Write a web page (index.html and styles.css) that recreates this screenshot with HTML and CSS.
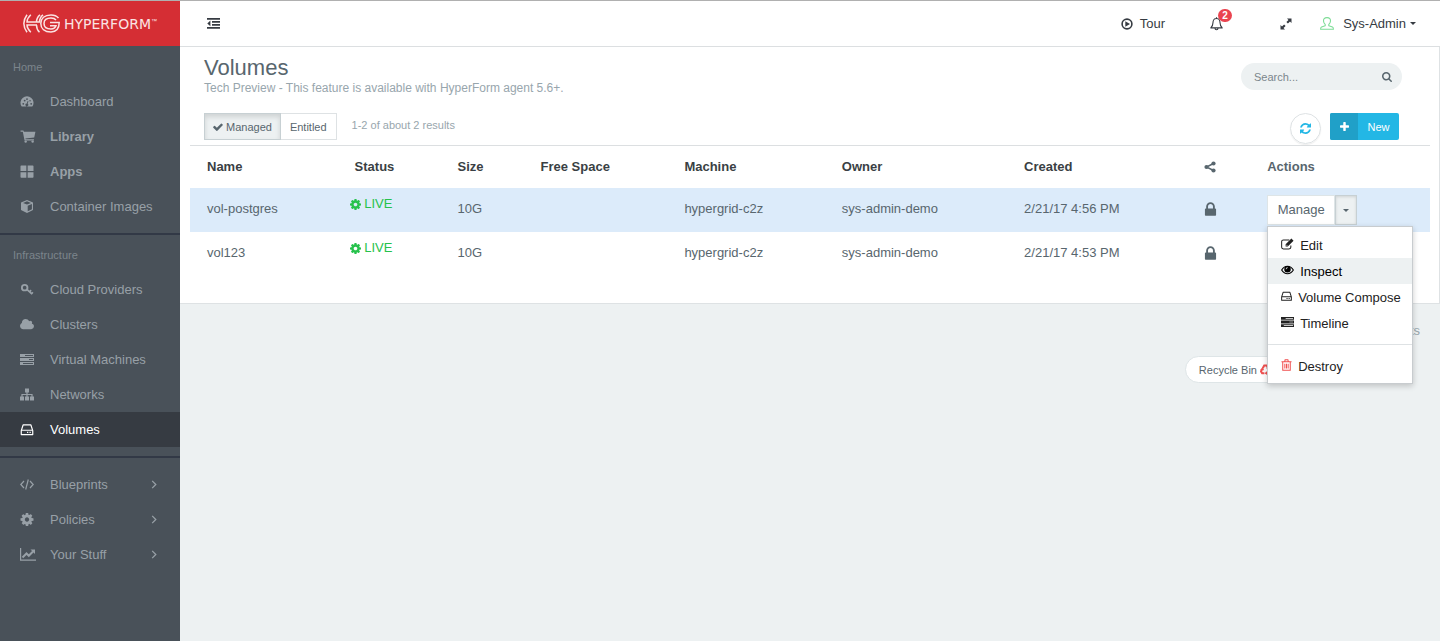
FILE: index.html
```html
<!DOCTYPE html>
<html lang="en">
<head>
  <meta charset="UTF-8">
  <meta name="viewport" content="width=device-width, initial-scale=1">
  <title>HyperForm - Volumes</title>
  <link rel="stylesheet" href="styles.css">
</head>
<body>
  <!-- icon sprite -->
  <svg class="sprite" aria-hidden="true">
    <symbol id="i-cog" viewBox="128 128 1536 1536"><path d="M1152 896q0-106-75-181t-181-75-181 75-75 181 75 181 181 75 181-75 75-181zm512-109v222q0 12-8 23t-20 13l-185 28q-19 54-39 91 35 50 107 138 10 12 10 25t-9 23q-27 37-99 108t-94 71q-12 0-26-9l-138-108q-44 23-91 38-16 136-29 186-7 28-36 28h-222q-14 0-24.500-8.500t-11.500-21.500l-28-184q-49-16-90-37l-141 107q-10 9-25 9-14 0-25-11-126-114-165-168-7-10-7-23 0-12 8-23 15-21 51-66.500t54-70.500q-27-50-41-99l-183-27q-13-2-21-12.500t-8-23.500v-222q0-12 8-23t19-13l186-28q14-46 39-92-40-57-107-138-10-12-10-24 0-10 9-23 26-36 98.500-107.500t94.500-71.500q13 0 26 10l138 107q44-23 91-38 16-136 29-186 7-28 36-28h222q14 0 24.500 8.500t11.500 21.500l28 184q49 16 90 37l142-107q9-9 24-9 13 0 25 10 129 119 165 170 7 8 7 22 0 12-8 23-15 21-51 66.500t-54 70.500q26 50 41 98l183 28q13 2 21 12.500t8 23.500z"/></symbol>
    <symbol id="i-check" viewBox="100 100 1592 1592"><path d="M1671 566q0 40-28 68l-724 724-136 136q-28 28-68 28t-68-28l-136-136-362-362q-28-28-28-68t28-68l136-136q28-28 68-28t68 28l294 295 656-657q28-28 68-28t68 28l136 136q28 28 28 68z"/></symbol>
    <symbol id="i-refresh" viewBox="128 128 1536 1536"><path d="M1639 1056q0 5-1 7-64 268-268 434.500t-478 166.500q-146 0-282.500-55t-243.500-157l-129 129q-19 19-45 19t-45-19-19-45v-448q0-26 19-45t45-19h448q26 0 45 19t19 45-19 45l-137 137q71 66 161 102t187 36q134 0 250-65t186-179q11-17 53-117 8-23 30-23h192q13 0 22.500 9.500t9.500 22.500zm25-800v448q0 26-19 45t-45 19h-448q-26 0-45-19t-19-45 19-45l138-138q-148-137-349-137-134 0-250 65t-186 179q-11 17-53 117-8 23-30 23h-199q-13 0-22.500-9.500t-9.500-22.500v-7q65-268 270-434.500t480-166.500q146 0 284 55.500t245 156.500l130-129q19-19 45-19t45 19 19 45z"/></symbol>
    <symbol id="i-search" viewBox="64 128 1664 1664"><path d="M1216 832q0-185-131.500-316.500t-316.500-131.500-316.500 131.500-131.500 316.500 131.500 316.500 316.500 131.500 316.500-131.500 131.500-316.500zm512 832q0 52-38 90t-90 38q-54 0-90-38l-343-342q-179 124-399 124-143 0-273.500-55.500t-225-150-150-225-55.500-273.500 55.500-273.500 150-225 225-150 273.500-55.500 273.500 55.500 225 150 150 225 55.500 273.500q0 220-124 399l343 343q37 37 37 90z"/></symbol>
    <symbol id="i-plus" viewBox="192 128 1408 1408"><path d="M1600 736v192q0 40-28 68t-68 28h-416v416q0 40-28 68t-68 28h-192q-40 0-68-28t-28-68v-416h-416q-40 0-68-28t-28-68v-192q0-40 28-68t68-28h416v-416q0-40 28-68t68-28h192q40 0 68 28t28 68v416h416q40 0 68 28t28 68z"/></symbol>
    <symbol id="i-lock" viewBox="224 128 1344 1408"><path d="M640 768h512v-192q0-106-75-181t-181-75-181 75-75 181v192zm832 96v576q0 40-28 68t-68 28h-960q-40 0-68-28t-28-68v-576q0-40 28-68t68-28h32v-192q0-184 132-316t316-132 316 132 132 316v192h32q40 0 68 28t28 68z"/></symbol>
    <symbol id="i-cloud" viewBox="64 0 1920 1792"><path d="M1984 1152q0 159-112.500 271.500t-271.500 112.500h-1088q-185 0-316.500-131.500t-131.500-316.500q0-132 71-241.500t187-163.500q-2-28-2-43 0-212 150-362t362-150q158 0 286.500 88t187.500 230q70-62 166-62 106 0 181 75t75 181q0 75-41 138 129 30 213 134.500t84 239.500z"/></symbol>
    <symbol id="i-gauge" viewBox="0 0 14 14"><path fill-rule="evenodd" d="M1.300 12.500A7 7 0 1 1 12.700 12.500zM2 9.500a1 1 0 1 0 2 0a1 1 0 1 0-2 0M3.500 6a1 1 0 1 0 2 0a1 1 0 1 0-2 0M6 4.400a1 1 0 1 0 2 0a1 1 0 1 0-2 0M10.500 9.500a1 1 0 1 0 2 0a1 1 0 1 0-2 0M9.500 6.300a.8.8 0 1 0 1.600 0a.8.8 0 1 0-1.600 0M7.700 6.500l-.9 2.700a1.500 1.500 0 1 0 .9.300l.9-2.700z"/></symbol>
    <symbol id="i-cart" viewBox="0 0 16 14"><path d="M0 .5h3l.6 1.500H16l-1.300 6L5.200 9.200l.2.800h9v1.200H4.300L2.400 1.800H0z"/><circle cx="5.500" cy="12.500" r="1.300"/><circle cx="13" cy="12.500" r="1.300"/></symbol>
    <symbol id="i-grid" viewBox="0 0 12 12"><path d="M0 1.200Q0 .5.700.5h4.700v5H0zM6.600.5h4.700q.7 0 .7.700v4.300H6.600zM0 6.700h5.400v5H.7q-.7 0-.7-.7zM6.600 6.700H12v4.300q0 .7-.7.700H6.600z"/></symbol>
    <symbol id="i-cube" viewBox="0 0 13 13"><path fill-rule="evenodd" d="M6.500 0L12.500 2.400V10L6.500 13L.5 10V2.400zM6.500 1.300L2.600 2.900L6.500 4.400L10.400 2.900zM7.200 5.700V11.200L11.400 9.200V4z"/></symbol>
    <symbol id="i-key" viewBox="0 0 14 14"><g fill="none" stroke="currentColor"><circle cx="4.500" cy="5" r="3" stroke-width="2"/><path stroke-width="1.800" d="M6.500 6.500L12.500 12M9.800 9.500l1.600-1.800M12 11.500l1.300-1.500"/></g></symbol>
    <symbol id="i-server" viewBox="0 0 14 12"><path fill-rule="evenodd" d="M0 .5h14v3H0zM0 4.500h14v3H0zM0 8.500h14v3H0zM5 1.600v.8h8v-.8zM9 5.600v.8h4v-.8zM3 9.600v.8h10v-.8z"/></symbol>
    <symbol id="i-sitemap" viewBox="0 0 14 12"><path d="M5 0h4v4H7.600v1.400h5V8H14v4h-4V8h1.400V6.600H7.600V8H9v4H5V8h1.400V6.600H2.600V8H4v4H0V8h1.400V5.400h5V4H5z"/></symbol>
    <symbol id="i-hdd" viewBox="0 0 12 12"><g fill="none" stroke="currentColor" stroke-width="1.100" stroke-linejoin="round"><path d="M.7 7L2.400 1.800H9.600L11.300 7V10.700H.7zM.7 6.700H11.300"/><path d="M6 8.700h1.200M8.300 8.700h1.200"/></g></symbol>
    <symbol id="i-code" viewBox="0 0 14 12"><path fill="none" stroke="currentColor" stroke-width="1.200" d="M4 2.500L.8 6L4 9.500M10 2.500L13.200 6L10 9.500M8.300 1L5.700 11"/></symbol>
    <symbol id="i-chart" viewBox="0 0 16 13"><path fill="none" stroke="currentColor" stroke-width="1.200" d="M.6 0V12.200H16"/><path fill="none" stroke="currentColor" stroke-width="2" d="M2.500 9.500L6.500 5.500L8.800 7.800L13 3.500"/><path d="M10.500 1.500H15V6z"/></symbol>
    <symbol id="i-right" viewBox="0 0 6 10"><path fill="none" stroke="currentColor" stroke-width="1.400" d="M1 1L5 5L1 9"/></symbol>
    <symbol id="i-outdent" viewBox="0 0 13 11"><path d="M0 0h13v1.800H0zM5 3h8v1.800H5zM5 6h8v1.800H5zM0 9h13v1.800H0zM3.400 2.600v5.600L.3 5.400z"/></symbol>
    <symbol id="i-play" viewBox="0 0 12 12"><circle cx="6" cy="6" r="4.900" fill="none" stroke="currentColor" stroke-width="1.600"/><path d="M4.300 3.200L9 6L4.300 8.800z"/></symbol>
    <symbol id="i-bell" viewBox="0 0 13 14"><path fill="none" stroke="currentColor" stroke-width="1.100" stroke-linejoin="round" d="M6.500 1.500C4 1.500 3 3.500 3 5.500C3 8 2.300 9.500 .8 10.900H12.200C10.700 9.500 10 8 10 5.500C10 3.500 9 1.500 6.500 1.500zM6.500.3V1.500M5 11.200a1.500 1.500 0 0 0 3 0"/></symbol>
    <symbol id="i-expand" viewBox="0 0 12 12"><path d="M7 .5h4.500V5L10 3.500L7.900 5.600L6.400 4.100L8.500 2zM5 11.500H.5V7L2 8.500L4.100 6.400L5.600 7.900L3.500 10z"/></symbol>
    <symbol id="i-user" viewBox="0 0 14 13"><path fill="none" stroke="currentColor" stroke-width="1.100" stroke-linejoin="round" d="M7 .6C4.300.6 3.400 2.200 3.500 4C3.600 5.600 4.300 6.600 5.200 7.400V8.700L1.500 10C.8 10.300.6 11 .6 12.300H13.400C13.400 11 13.200 10.300 12.500 10L8.800 8.700V7.400C9.700 6.600 10.400 5.600 10.500 4C10.600 2.200 9.700.6 7 .6z"/></symbol>
    <symbol id="i-share" viewBox="0 0 12 12"><path fill="none" stroke="currentColor" stroke-width="1.400" d="M9.500 2.500L2.500 6L9.500 9.500"/><circle cx="9.500" cy="2.500" r="2.100"/><circle cx="2.500" cy="6" r="2.100"/><circle cx="9.500" cy="9.500" r="2.100"/></symbol>
    <symbol id="i-edit" viewBox="0 0 14 12"><path fill="none" stroke="currentColor" stroke-width="1.100" d="M9 1.600H2.600Q.7 1.600.7 3.200V9.600Q.7 11.300 2.600 11.300H8.600Q10.600 11.300 10.600 9.600V7.500"/><path fill-rule="evenodd" d="M11.200.2L13.500 2.500L7.300 8.700H5V6.400zM6 6.900L7.200 8L6.600 8.200L5.600 7.200z"/></symbol>
    <symbol id="i-eye" viewBox="0 0 14 12"><path fill="none" stroke="currentColor" stroke-width="1.200" d="M.7 6Q3.200 2 7 2T13.300 6Q10.800 10 7 10T.7 6z"/><path fill-rule="evenodd" d="M7 1.800A3.400 3.400 0 1 1 7 8.800A3.400 3.400 0 1 1 7 1.800zM5 5.300h.7Q5.800 3.900 7.200 3.800V3.100Q5.100 3.200 5 5.300z"/></symbol>
    <symbol id="i-trash" viewBox="0 0 12 13"><path fill="none" stroke="currentColor" stroke-width="1.100" d="M.5 2.900H11.500M4 2.700L4.500 .8H7.500L8 2.700M1.900 3V12.200H10.100V3M4.200 5V10.300M6 5V10.300M7.800 5V10.300"/></symbol>
    <symbol id="i-recycle" viewBox="0 0 12 12"><path fill="none" stroke="currentColor" stroke-width="2.200" d="M3 4.600L4.600 1.700H7.300L8.300 3.500M9.600 5.500L11 8L9.800 10H7.200M4.800 10H2.300L1 8L2.200 6"/><path d="M6.500 4.500L10 2V5.500zM7.800 7.500V12L5 10zM.2 6.500L2.500 3.500L4.600 6.800z"/></symbol>
  </svg>

  <div class="app">
    <aside class="sidebar">
      <a href="#" class="logo" aria-label="HyperForm home">
        <svg class="logo-mark" viewBox="0 0 37 19" aria-hidden="true">
          <g fill="none" stroke="currentColor" stroke-width="1.500">
            <path d="M4 .8Q-2.300 9.500 4 18.200M7.800.8Q4 4.500 4 8H16.500Q16.500 3.500 20 .8M7.800 18.200Q4 14.500 4 11H14M17 .8Q13.500 3.500 13.500 8M13.500 11Q13.500 15.500 16.500 18.200"/>
            <path d="M35.500 4Q33 .9 28 .9C21.500.9 17.800 4.500 17.800 9.500S21.500 18.100 28 18.100Q36.200 17.500 36.200 8.500H27M33 6Q31.500 4.100 28 4.100C23.500 4.100 21 6 21 9.500S23.500 15 28 15Q32 14.700 33 11.700H27"/>
          </g>
        </svg>
        <span class="logo-text">HYPERFORM</span><span class="logo-tm">™</span>
      </a>

      <nav>
        <div class="nav-section">
          <h2 class="nav-title">Home</h2>
          <ul>
            <li><a href="#"><svg class="nav-icon"><use href="#i-gauge"/></svg>Dashboard</a></li>
            <li><a href="#" class="strong"><svg class="nav-icon wide"><use href="#i-cart"/></svg>Library</a></li>
            <li><a href="#" class="strong"><svg class="nav-icon"><use href="#i-grid"/></svg>Apps</a></li>
            <li><a href="#"><svg class="nav-icon"><use href="#i-cube"/></svg>Container Images</a></li>
          </ul>
        </div>
        <div class="nav-section">
          <h2 class="nav-title">Infrastructure</h2>
          <ul>
            <li><a href="#"><svg class="nav-icon"><use href="#i-key"/></svg>Cloud Providers</a></li>
            <li><a href="#"><svg class="nav-icon"><use href="#i-cloud"/></svg>Clusters</a></li>
            <li><a href="#"><svg class="nav-icon"><use href="#i-server"/></svg>Virtual Machines</a></li>
            <li><a href="#"><svg class="nav-icon"><use href="#i-sitemap"/></svg>Networks</a></li>
            <li><a href="#" class="active"><svg class="nav-icon"><use href="#i-hdd"/></svg>Volumes</a></li>
          </ul>
        </div>
        <div class="nav-section untitled">
          <ul>
            <li><a href="#"><svg class="nav-icon"><use href="#i-code"/></svg>Blueprints<svg class="nav-arrow"><use href="#i-right"/></svg></a></li>
            <li><a href="#"><svg class="nav-icon"><use href="#i-cog"/></svg>Policies<svg class="nav-arrow"><use href="#i-right"/></svg></a></li>
            <li><a href="#"><svg class="nav-icon wide"><use href="#i-chart"/></svg>Your Stuff<svg class="nav-arrow"><use href="#i-right"/></svg></a></li>
          </ul>
        </div>
      </nav>
    </aside>

    <div class="main">
      <header class="topbar">
        <button type="button" class="toggle" aria-label="Toggle menu"><svg><use href="#i-outdent"/></svg></button>
        <a href="#" class="tour"><svg><use href="#i-play"/></svg>Tour</a>
        <a href="#" class="bell" aria-label="Notifications"><svg><use href="#i-bell"/></svg><span class="badge">2</span></a>
        <button type="button" class="expand" aria-label="Full screen"><svg><use href="#i-expand"/></svg></button>
        <button type="button" class="account"><svg><use href="#i-user"/></svg>Sys-Admin<span class="caret"></span></button>
      </header>

      <main>
        <section class="panel">
          <div class="panel-head">
            <div class="head-row">
              <div>
                <h1>Volumes</h1>
                <p class="subtitle">Tech Preview - This feature is available with HyperForm agent 5.6+.</p>
              </div>
              <form class="search">
                <input type="text" placeholder="Search..." aria-label="Search volumes">
                <button type="submit" aria-label="Search"><svg><use href="#i-search"/></svg></button>
              </form>
            </div>
            <div class="tool-row">
              <div class="btn-group">
                <button type="button" class="btn pressed"><svg><use href="#i-check"/></svg>Managed</button>
                <button type="button" class="btn">Entitled</button>
              </div>
              <span class="count">1-2 of about 2 results</span>
              <button type="button" class="refresh" aria-label="Refresh"><svg><use href="#i-refresh"/></svg></button>
              <button type="button" class="new"><span class="new-icon"><svg><use href="#i-plus"/></svg></span><span class="new-text">New</span></button>
            </div>
          </div>

          <table>
            <colgroup>
              <col class="c-name"><col class="c-status"><col class="c-size"><col class="c-free"><col class="c-machine">
              <col class="c-owner"><col class="c-created"><col class="c-share"><col class="c-actions">
            </colgroup>
            <thead>
              <tr>
                <th>Name</th>
                <th class="status-head">Status</th>
                <th>Size</th>
                <th>Free Space</th>
                <th>Machine</th>
                <th>Owner</th>
                <th>Created</th>
                <th class="muted" aria-label="Shared"><svg class="share"><use href="#i-share"/></svg></th>
                <th class="muted">Actions</th>
              </tr>
            </thead>
            <tbody>
              <tr class="selected">
                <td>vol-postgres</td>
                <td class="status"><svg><use href="#i-cog"/></svg> LIVE</td>
                <td>10G</td>
                <td></td>
                <td>hypergrid-c2z</td>
                <td>sys-admin-demo</td>
                <td>2/21/17 4:56 PM</td>
                <td><svg class="lock"><use href="#i-lock"/></svg></td>
                <td class="actions">
                  <div class="manage">
                    <button type="button" class="manage-btn">Manage</button>
                    <button type="button" class="manage-caret" aria-label="More actions"><span class="caret"></span></button>
                    <ul class="menu">
                      <li><a href="#"><svg><use href="#i-edit"/></svg>Edit</a></li>
                      <li><a href="#" class="hover"><svg><use href="#i-eye"/></svg>Inspect</a></li>
                      <li><a href="#"><svg class="narrow"><use href="#i-hdd"/></svg>Volume Compose</a></li>
                      <li><a href="#"><svg><use href="#i-server"/></svg>Timeline</a></li>
                      <li class="divider"></li>
                      <li><a href="#"><svg class="narrow danger"><use href="#i-trash"/></svg>Destroy</a></li>
                    </ul>
                  </div>
                </td>
              </tr>
              <tr>
                <td>vol123</td>
                <td class="status"><svg><use href="#i-cog"/></svg> LIVE</td>
                <td>10G</td>
                <td></td>
                <td>hypergrid-c2z</td>
                <td>sys-admin-demo</td>
                <td>2/21/17 4:53 PM</td>
                <td><svg class="lock"><use href="#i-lock"/></svg></td>
                <td class="actions"></td>
              </tr>
            </tbody>
          </table>
        </section>

        <div class="below">
          <p class="total">2 results</p>
          <button type="button" class="recycle">Recycle Bin <svg><use href="#i-recycle"/></svg></button>
        </div>
      </main>
    </div>
  </div>
</body>
</html>
```
FILE: styles.css
```css
* {
  margin: 0;
  padding: 0;
  box-sizing: border-box;
}

body {
  background: #edf1f2;
  color: #58666e;
  font-family: "Liberation Sans", Arial, sans-serif;
  font-size: 13px;
  line-height: 16px;
}

ul {
  list-style: none;
}

a {
  color: inherit;
  text-decoration: none;
}

button,
input {
  font: inherit;
  color: inherit;
  border: none;
  background: none;
}

button {
  cursor: pointer;
}

svg {
  display: inline-block;
  fill: currentColor;
}

.sprite {
  display: none;
}

.app {
  display: flex;
  min-height: 100vh;
  border-top: 1px solid #b0b0b0;
}

/* sidebar */
.sidebar {
  flex: none;
  width: 180px;
  background: #495159;
  color: #98a0a7;
}

.logo {
  display: flex;
  align-items: center;
  height: 45px;
  padding-left: 23px;
  background: #d52e34;
  color: #fbe3e3;
}

.logo-mark {
  width: 37px;
  height: 19px;
  margin-right: 4px;
}

.logo-text {
  font-family: "DejaVu Sans", sans-serif;
  font-size: 14px;
}

.logo-tm {
  align-self: flex-start;
  padding-top: 12px;
  font-size: 6px;
}

nav {
  padding-top: 1px;
}

.nav-section {
  padding-bottom: 9px;
  border-bottom: 2px solid #323946;
}

.nav-section.untitled {
  padding-top: 9px;
  border-bottom: none;
}

.nav-title {
  height: 37px;
  padding: 12px 13px 0;
  color: #7c858c;
  font-size: 11px;
  font-weight: normal;
}

.nav-section a {
  display: flex;
  align-items: center;
  height: 35px;
  padding: 0 23px 0 20px;
}

.nav-section a.strong {
  font-weight: bold;
}

.nav-section a.active {
  background: #363b42;
  color: #fff;
}

.nav-icon {
  width: 14px;
  height: 13px;
  margin-right: 16px;
}

.nav-icon.wide {
  width: 16px;
  margin-right: 14px;
}

.nav-arrow {
  width: 6px;
  height: 9px;
  margin-left: auto;
}

/* top bar */
.main {
  flex: 1;
  min-width: 0;
}

.topbar {
  display: flex;
  align-items: center;
  height: 46px;
  padding: 0 24px 0 27px;
  background: #fff;
  border-bottom: 1px solid #dcdfe1;
  color: #363b42;
}

.topbar svg {
  display: block;
  width: 12px;
  height: 12px;
}

.toggle {
  margin-right: auto;
}

.topbar .toggle svg {
  width: 13px;
  height: 11px;
}

.tour {
  display: flex;
  align-items: center;
  gap: 7px;
  margin-right: 45px;
}

.bell {
  position: relative;
  margin-right: 57px;
}

.topbar .bell svg {
  width: 13px;
  height: 14px;
}

.badge {
  position: absolute;
  top: -8px;
  left: 8px;
  width: 14px;
  height: 13px;
  border-radius: 7px;
  background: #ea4450;
  color: #fff;
  font-size: 10px;
  font-weight: bold;
  line-height: 13px;
  text-align: center;
}

.expand {
  margin-right: 28px;
}

.account {
  display: flex;
  align-items: center;
}

.topbar .account svg {
  width: 14px;
  height: 13px;
  margin-right: 9px;
  color: #7ddc96;
}

.caret {
  display: inline-block;
  border: 3px solid transparent;
  border-top-color: currentColor;
  border-bottom: none;
}

.account .caret {
  margin-left: 4px;
}

/* volumes panel */
.panel {
  padding: 0 9px 27px 10px;
  background: #fff;
  border-right: 1px solid #dee2e4;
  border-bottom: 1px solid #dee2e4;
}

.panel-head {
  padding: 9px 28px 0 14px;
  border-bottom: 1px solid #dcdfe1;
}

.head-row {
  display: flex;
  justify-content: space-between;
}

h1 {
  font-size: 22px;
  font-weight: normal;
  line-height: 24px;
}

.subtitle {
  color: #98a6ad;
  font-size: 12px;
}

.search {
  display: flex;
  align-items: center;
  width: 161px;
  height: 27px;
  margin-top: 7px;
  padding: 0 10px 0 13px;
  border-radius: 14px;
  background: #edf1f2;
}

.search input {
  flex: 1;
  min-width: 0;
  font-size: 11px;
  outline: none;
}

.search input::placeholder {
  color: #7b868c;
}

.search svg {
  display: block;
  width: 10px;
  height: 10px;
}

.tool-row {
  display: flex;
  height: 49px;
  padding: 17px 3px 0 0;
}

.btn-group {
  display: flex;
  height: 27px;
  font-size: 11px;
}

.btn {
  padding: 0 8px;
  border: 1px solid #dee2e4;
  background: #fff;
}

.btn + .btn {
  padding: 0 9px;
  border-left: none;
}

.btn.pressed {
  border-color: #c7d0d3;
  background: #edf1f2;
  box-shadow: inset 0 3px 5px rgba(0, 0, 0, 0.125);
}

.btn svg {
  width: 10px;
  height: 10px;
  margin-right: 3px;
  vertical-align: -1px;
}

.count {
  margin: 4px auto 0 15px;
  color: #98a6ad;
  font-size: 11px;
}

.refresh {
  width: 31px;
  height: 31px;
  margin-right: 9px;
  border: 1px solid #dee2e4;
  border-radius: 50%;
  box-shadow: 0 1px 1px rgba(90, 90, 90, 0.1);
  color: #23b7e5;
}

.refresh svg {
  width: 11px;
  height: 11px;
  vertical-align: -1px;
}

.new {
  display: flex;
  width: 69px;
  height: 27px;
  border-radius: 2px;
  overflow: hidden;
  background: #23b7e5;
  color: #fff;
  font-size: 11px;
  line-height: 28px;
}

.new-icon {
  width: 28px;
  height: 27px;
  background: #20a0c8;
}

.new-icon svg {
  width: 9px;
  height: 9px;
}

.new-text {
  flex: 1;
}

/* table */
table {
  width: 100%;
  table-layout: fixed;
  border-collapse: collapse;
}

.c-name { width: 11.5%; }
.c-status { width: 8.7%; }
.c-size { width: 6.7%; }
.c-free { width: 11.6%; }
.c-machine { width: 12.7%; }
.c-owner { width: 14.7%; }
.c-created { width: 14.5%; }
.c-share { width: 5.1%; }
.c-actions { width: 14.5%; }

th,
td {
  height: 44px;
  padding: 13px 0 0 17px;
  text-align: left;
  vertical-align: top;
}

th {
  height: 42px;
  color: #3a3f44;
}

th.status-head {
  padding-left: 22px;
}

th.muted {
  color: #58666e;
}

.selected {
  background: #dcebfa;
}

td.status {
  padding-top: 8px;
  color: #27c24c;
}

.status svg {
  width: 11px;
  height: 11px;
  vertical-align: -2px;
}

.share {
  width: 12px;
  height: 12px;
  vertical-align: -2px;
}

.lock {
  width: 13px;
  height: 14px;
  vertical-align: -3px;
}

td.actions {
  padding-top: 7px;
}

.manage {
  position: relative;
  display: flex;
  width: 90px;
  height: 30px;
}

.manage-btn {
  flex: 1;
  border: 1px solid #dee5e7;
  background: #fff;
}

.manage-caret {
  width: 22px;
  border: 1px solid #c7d0d3;
  background: #edf1f2;
  box-shadow: inset 0 1px 3px rgba(0, 0, 0, 0.125);
}

.manage-caret .caret {
  vertical-align: 2px;
}

.menu {
  position: absolute;
  top: 31px;
  left: 0;
  z-index: 10;
  width: 146px;
  padding: 5px 0 4px;
  border: 1px solid #c8cccf;
  background: #fff;
  box-shadow: 0 2px 6px rgba(0, 0, 0, 0.2);
  color: #222;
}

.menu a {
  display: flex;
  align-items: center;
  height: 26px;
  padding: 2px 13px 0;
  white-space: nowrap;
}

.menu a.hover {
  background: #edf1f2;
  color: #000;
}

.menu svg {
  flex: none;
  width: 13px;
  height: 12px;
  margin: 0 6px 4px 0;
}

.menu svg.narrow {
  width: 11px;
}

.menu svg.danger {
  color: #f05050;
}

.divider {
  height: 1px;
  margin: 8px 0;
  background: #dee2e4;
}

/* under the panel */
.below {
  display: flex;
  flex-direction: column;
  align-items: flex-end;
  padding: 19px 20px;
}

.total {
  color: #98a6ad;
}

.recycle {
  height: 27px;
  margin: 17px 135px 0 0;
  padding: 0 13px;
  border: 1px solid #dee5e7;
  border-radius: 14px;
  background: #fff;
  font-size: 11px;
}

.recycle svg {
  width: 11px;
  height: 11px;
  color: #f05050;
  vertical-align: -1px;
}
```
